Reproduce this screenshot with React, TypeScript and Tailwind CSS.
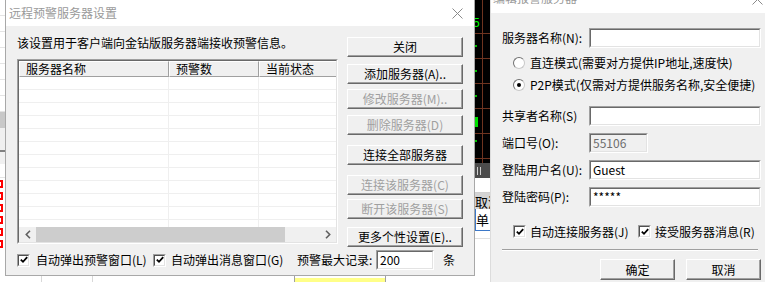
import React from "react";

const sunkenOuter =
  "border-t border-l border-t-[#a0a0a0] border-l-[#a0a0a0] border-r border-b border-r-white border-b-white";
const sunkenInner =
  "border-t border-l border-t-[#696969] border-l-[#696969] border-r border-b border-r-[#e3e3e3] border-b-[#e3e3e3]";

function Field({ w, value, disabled }: { w: string; value?: string; disabled?: boolean }) {
  return (
    <div className={`${w} h-[20px] shrink-0 ${sunkenOuter}`}>
      <div
        className={`h-full ${sunkenInner} ${
          disabled ? "bg-[#f0f0f0] text-[#6d6d6d]" : "bg-white text-black"
        } flex items-center pl-[2px] text-[12px] leading-none`}
      >
        {value}
      </div>
    </div>
  );
}

function Btn({
  label,
  disabled,
  w = "w-[116px]",
  h = "h-[20px]",
  className = "",
}: {
  label: string;
  disabled?: boolean;
  w?: string;
  h?: string;
  className?: string;
}) {
  return (
    <div
      className={`${w} ${h} shrink-0 bg-[#f0f0f0] border-t border-l border-t-white border-l-white border-r border-b border-r-[#696969] border-b-[#696969] shadow-[inset_-1px_-1px_0_#a0a0a0] flex items-center justify-center text-[12px] leading-none whitespace-nowrap ${
        disabled ? "text-[#a0a0a0]" : "text-black"
      } ${className}`}
    >
      {label}
    </div>
  );
}

function Check() {
  return (
    <div className="w-[13px] h-[13px] shrink-0 border-t border-l border-t-[#a0a0a0] border-l-[#a0a0a0] border-r border-b border-r-white border-b-white">
      <div className="w-full h-full bg-white border-t border-l border-t-[#505050] border-l-[#505050] border-r border-b border-r-[#e3e3e3] border-b-[#e3e3e3] flex items-center justify-center">
        <svg width="8" height="8" viewBox="0 0 8 8">
          <path d="M0.8 3.6 L3 5.8 L7.2 1.2" stroke="#000" strokeWidth="1.8" fill="none" />
        </svg>
      </div>
    </div>
  );
}

function Radio({ on }: { on?: boolean }) {
  return (
    <div className="w-[12px] h-[12px] shrink-0 rounded-full border border-t-[#707070] border-l-[#707070] border-r-[#c8c8c8] border-b-[#c8c8c8] bg-white flex items-center justify-center">
      {on && <div className="w-[4px] h-[4px] rounded-full bg-black" />}
    </div>
  );
}

function CloseX({ color }: { color: string }) {
  return (
    <svg width="11" height="11" viewBox="0 0 11 11" className="shrink-0">
      <path d="M0.5 0.5 L10.5 10.5 M10.5 0.5 L0.5 10.5" stroke={color} strokeWidth="1" fill="none" />
    </svg>
  );
}

const rows = Array.from({ length: 12 }, (_, i) => i);

export default function App() {
  return (
    <div className="relative w-[765px] h-[282px] overflow-hidden bg-white font-['Noto_Sans_CJK_SC','Noto_Sans',sans-serif] text-[12px] leading-none text-black">
      {/* background app: left strip */}
      <div className="absolute left-0 top-0 w-[5px] h-[282px] flex flex-col overflow-hidden">
        {[0, 1, 2, 3, 4, 5, 6].map((i) => (
          <div key={i} className="h-[16px] shrink-0 border-b border-[#e4e4e4] bg-white" />
        ))}
        <div className="h-[16px] shrink-0 bg-[#c8c8c8]" />
        <div className="h-[22px] shrink-0 bg-[#f0f0f0]" />
        <div className="h-[2px] shrink-0 bg-[#808080]" />
        <div className="h-[12px] shrink-0 bg-[#f0f0f0]" />
        <div className="h-[14px] shrink-0 bg-white border-b border-[#e4e4e4]" />
        {[0, 1, 2, 3, 4, 5].map((i) => (
          <div key={i} className="h-[12px] shrink-0 overflow-hidden flex items-center">
            <div className="w-[3px] h-[8px] border-2 border-l-0 border-[#ff0000]" />
          </div>
        ))}
        <div className="flex-1 bg-white" />
      </div>

      {/* background app: chart strip between dialogs */}
      <div className="absolute left-[475px] top-0 w-[15px] h-[282px] flex flex-col overflow-hidden">
        <svg width="15" height="163" className="shrink-0">
          <rect width="15" height="163" fill="#000" />
          <line x1="7.5" y1="0" x2="7.5" y2="163" stroke="#6e3420" />
          {[33, 58, 83, 108, 133, 158].map((y) => (
            <line key={y} x1="0" x2="15" y1={y + 0.5} y2={y + 0.5} stroke="#6e3420" />
          ))}
          <text x="-2" y="27" fill="#00ff00" fontSize="12" fontFamily="Liberation Sans">
            5
          </text>
          <rect x="0" y="45" width="2" height="2" fill="#00c000" />
          <rect x="0" y="70" width="2" height="2" fill="#00c000" />
          <rect x="0" y="95" width="2" height="2" fill="#00c000" />
          <rect x="0" y="117" width="3" height="10" fill="#00e000" />
          <rect x="0" y="140" width="2" height="2" fill="#00c000" />
        </svg>
        <div className="h-[15px] shrink-0 bg-[#4c4c4c] flex items-center pl-[2px] gap-[2px]">
          <div className="w-[1px] h-[8px] bg-[#d0d0d0]" />
          <div className="w-[1px] h-[8px] bg-[#d0d0d0]" />
        </div>
        <div className="h-[15px] shrink-0 bg-white border-b border-[#d0d0d0]" />
        <div className="h-[16px] shrink-0 bg-[#d4d4d4] flex items-center whitespace-nowrap text-[13px]">
          取消
        </div>
        <div className="h-[22px] shrink-0 bg-white border-l border-b border-[#3c78c8] flex items-center whitespace-nowrap text-[13px]">
          单
        </div>
        <div className="h-[8px] shrink-0 bg-white border-b border-[#e0e0e0]" />
        <div className="flex-1 bg-white" />
      </div>

      {/* background app: bottom strip */}
      <div className="absolute left-0 top-[276px] w-[475px] h-[6px] flex">
        <div className="w-[42px] h-full bg-white border-r border-[#d8d8d8]" />
        <div className="w-[51px] h-full bg-white border-r border-[#d8d8d8]" />
        <div className="w-[202px] h-full bg-white border-r border-[#a0a0a0]" />
        <div className="w-[90px] h-full bg-white flex flex-col">
          <div className="h-[2px] bg-white" />
          <div className="flex-1 bg-[#ffff88]" />
        </div>
        <div className="flex-1 h-full bg-white border-l border-[#a0a0a0]" />
      </div>

      {/* left dialog */}
      <div className="absolute left-[5px] top-0 w-[470px] h-[276px] border-l border-r border-b border-[#a8a8a8] bg-[#f0f0f0] flex flex-col">
        <div className="h-[26px] shrink-0 bg-white flex items-center justify-between pl-[3px] pr-[11px]">
          <span className="text-[#9a9a9a] text-[12px] leading-none">远程预警服务器设置</span>
          <CloseX color="#8a8a8a" />
        </div>

        <div className="flex pl-[11px]">
          <div className="flex flex-col w-[321px] shrink-0">
            <div className="mt-[11px] h-[12px] whitespace-nowrap">
              该设置用于客户端向金钻版服务器端接收预警信息。
            </div>
            <div className={`mt-[10px] h-[185px] w-[321px] ${sunkenOuter}`}>
              <div className={`h-full ${sunkenInner} bg-white flex flex-col overflow-hidden`}>
                <div className="h-[16px] shrink-0 flex">
                  <div className="w-[150px] h-full bg-[#f0f0f0] border-t border-l border-t-white border-l-white border-r border-b border-r-[#a0a0a0] border-b-[#a0a0a0] pl-[6px] flex items-center">
                    服务器名称
                  </div>
                  <div className="w-[90px] h-full bg-[#f0f0f0] border-t border-l border-t-white border-l-white border-r border-b border-r-[#a0a0a0] border-b-[#a0a0a0] pl-[6px] flex items-center">
                    预警数
                  </div>
                  <div className="flex-1 h-full bg-[#f0f0f0] border-t border-l border-t-white border-l-white border-b border-b-[#a0a0a0] pl-[6px] flex items-center whitespace-nowrap">
                    当前状态
                  </div>
                </div>
                <div className="flex-1 overflow-hidden">
                  {rows.map((r) => (
                    <div key={r} className="h-[13px] flex border-b border-[#efefef]">
                      <div className="w-[150px] h-full border-r border-[#efefef]" />
                      <div className="w-[90px] h-full border-r border-[#efefef]" />
                      <div className="flex-1 h-full" />
                    </div>
                  ))}
                </div>
                <div className="h-[15px] shrink-0 flex bg-[#f0f0f0]">
                  <div className="w-[17px] h-full flex items-center justify-center">
                    <svg width="6" height="9" viewBox="0 0 6 9">
                      <path d="M5 0.8 L1.3 4.5 L5 8.2" stroke="#606060" strokeWidth="1.6" fill="none" />
                    </svg>
                  </div>
                  <div className="w-[249px] h-full bg-[#cdcdcd]" />
                  <div className="flex-1 h-full" />
                  <div className="w-[17px] h-full flex items-center justify-center">
                    <svg width="6" height="9" viewBox="0 0 6 9">
                      <path d="M1 0.8 L4.7 4.5 L1 8.2" stroke="#606060" strokeWidth="1.6" fill="none" />
                    </svg>
                  </div>
                </div>
              </div>
            </div>
          </div>

          <div className="ml-[9px] mt-[11px] flex flex-col">
            <Btn label="关闭" />
            <Btn label="添加服务器(A).." className="mt-[7px]" />
            <Btn label="修改服务器(M).." disabled className="mt-[5px]" />
            <Btn label="删除服务器(D)" disabled className="mt-[6px]" />
            <Btn label="连接全部服务器" className="mt-[10px]" />
            <Btn label="连接该服务器(C)" disabled className="mt-[10px]" />
            <Btn label="断开该服务器(S)" disabled className="mt-[4px]" />
            <Btn label="更多个性设置(E).." className="mt-[8px]" />
          </div>
        </div>

        <div className="mt-[3px] h-[20px] flex items-center pl-[11px]">
          <Check />
          <span className="ml-[6px] w-[117px] shrink-0 whitespace-nowrap">自动弹出预警窗口(L)</span>
          <Check />
          <span className="ml-[5px] w-[126px] shrink-0 whitespace-nowrap">自动弹出消息窗口(G)</span>
          <span className="w-[79px] shrink-0 whitespace-nowrap">预警最大记录:</span>
          <Field w="w-[58px]" value="200" />
          <span className="ml-[9px]">条</span>
        </div>
      </div>

      {/* right dialog */}
      <div className="absolute left-[490px] top-0 w-[290px] h-[282px] border-l border-[#dcdcdc] bg-[#f0f0f0] flex flex-col">
        <div className="h-[13px] shrink-0 bg-white overflow-hidden flex items-start justify-between pl-[2px] pr-[17px]">
          <span className="-mt-[8px] text-[#9a9a9a] whitespace-nowrap leading-[12px]">编辑报警服务器</span>
          <div className="-mt-[6px]">
            <CloseX color="#8a8a8a" />
          </div>
        </div>

        <div className="flex flex-col pl-[11px]">
          <div className="mt-[15px] h-[20px] flex items-center">
            <span className="w-[87px] shrink-0 whitespace-nowrap">服务器名称(N):</span>
            <Field w="w-[172px]" />
          </div>

          <div className="mt-[8px] h-[14px] flex items-center pl-[11px] gap-[5px]">
            <Radio />
            <span className="whitespace-nowrap">直连模式(需要对方提供IP地址,速度快)</span>
          </div>
          <div className="mt-[8px] h-[14px] flex items-center pl-[11px] gap-[5px]">
            <Radio on />
            <span className="whitespace-nowrap">P2P模式(仅需对方提供服务名称,安全便捷)</span>
          </div>

          <div className="mt-[14px] h-[20px] flex items-center">
            <span className="w-[87px] shrink-0 whitespace-nowrap">共享者名称(S)</span>
            <Field w="w-[172px]" />
          </div>
          <div className="mt-[7px] h-[20px] flex items-center">
            <span className="w-[87px] shrink-0 whitespace-nowrap">端口号(O):</span>
            <Field w="w-[59px]" value="55106" disabled />
          </div>
          <div className="mt-[7px] h-[20px] flex items-center">
            <span className="w-[87px] shrink-0 whitespace-nowrap">登陆用户名(U):</span>
            <Field w="w-[172px]" value="Guest" />
          </div>
          <div className="mt-[7px] h-[20px] flex items-center">
            <span className="w-[87px] shrink-0 whitespace-nowrap">登陆密码(P):</span>
            <Field w="w-[172px]" value="*****" />
          </div>

          <div className="mt-[18px] h-[13px] flex items-center pl-[11px]">
            <Check />
            <span className="ml-[4px] w-[108px] shrink-0 whitespace-nowrap">自动连接服务器(J)</span>
            <Check />
            <span className="ml-[4px] whitespace-nowrap">接受服务器消息(R)</span>
          </div>

          <div className="mt-[11px] w-[256px] h-[2px] border-t border-t-[#a0a0a0] border-b border-b-white" />

          <div className="mt-[8px] flex pl-[98px] gap-[11px]">
            <Btn label="确定" w="w-[75px]" h="h-[21px]" />
            <Btn label="取消" w="w-[75px]" h="h-[21px]" />
          </div>
        </div>
      </div>
    </div>
  );
}
